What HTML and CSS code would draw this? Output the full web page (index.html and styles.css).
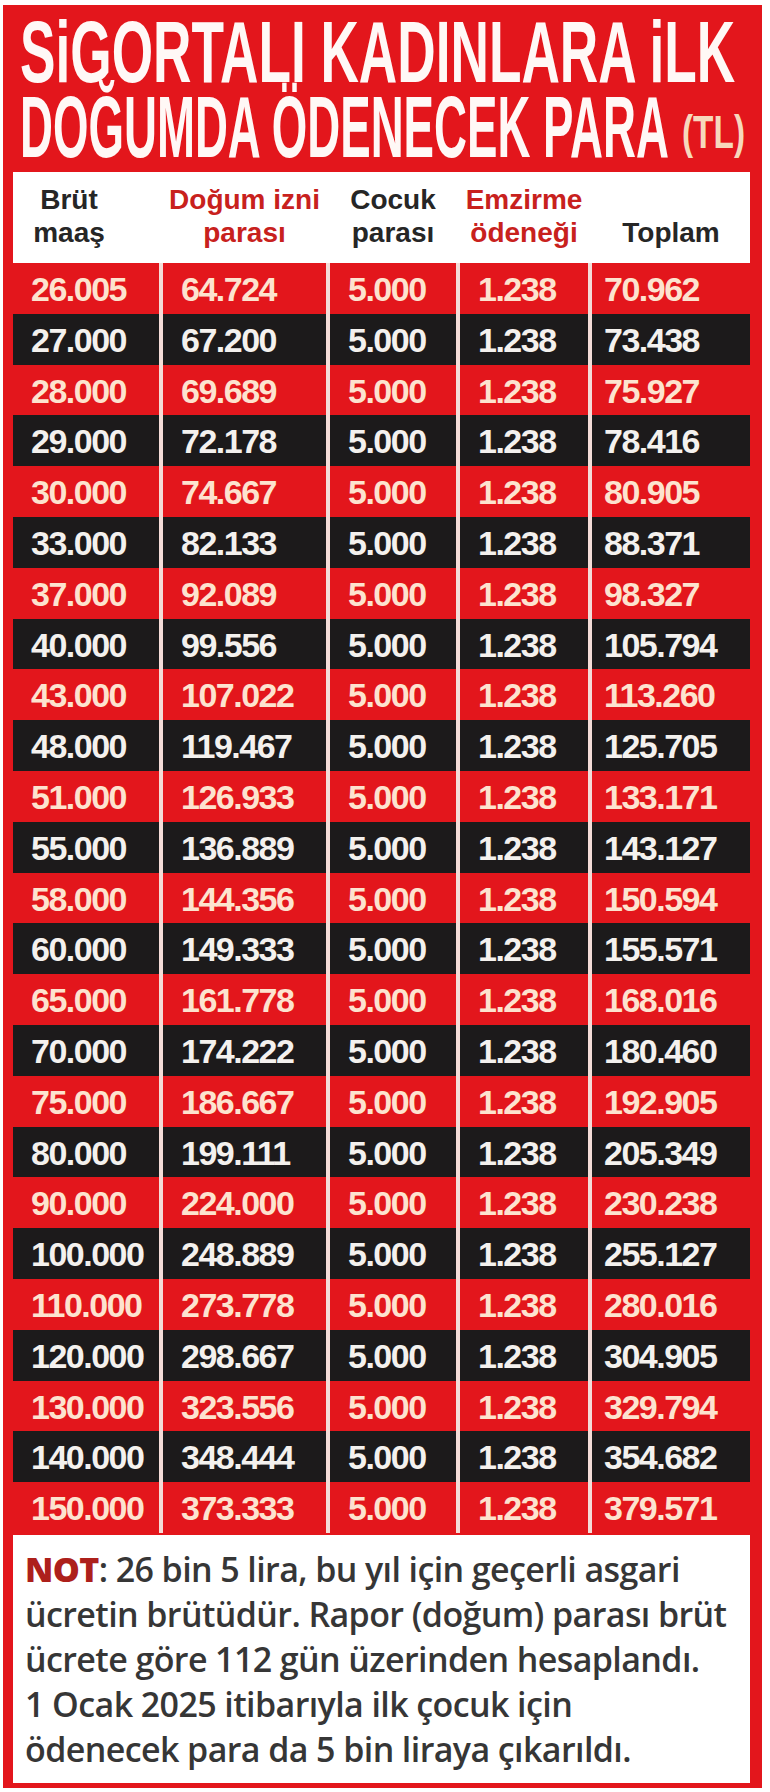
FILE: index.html
```html
<!DOCTYPE html>
<html lang="tr">
<head>
<meta charset="utf-8">
<title>Sigortalı kadınlara ilk doğumda ödenecek para</title>
<link rel="stylesheet" href="styles.css">
</head>
<body>
<div class="panel">
  <h1 class="title">
    <span class="t1">SiGORTALI KADINLARA iLK</span>
    <span class="t2"><span class="t2-main">DOĞUMDA ÖDENECEK PARA</span><span class="tl">(TL)</span></span>
  </h1>
  <div class="thead">
    <div class="th th-first">Brüt<br>maaş</div>
    <div class="th red-text">Doğum izni<br>parası</div>
    <div class="th">Cocuk<br>parası</div>
    <div class="th red-text">Emzirme<br>ödeneği</div>
    <div class="th">Toplam</div>
  </div>
  <div class="rows">
    <div class="row"><div>26.005</div><div>64.724</div><div>5.000</div><div>1.238</div><div>70.962</div></div>
    <div class="row"><div>27.000</div><div>67.200</div><div>5.000</div><div>1.238</div><div>73.438</div></div>
    <div class="row"><div>28.000</div><div>69.689</div><div>5.000</div><div>1.238</div><div>75.927</div></div>
    <div class="row"><div>29.000</div><div>72.178</div><div>5.000</div><div>1.238</div><div>78.416</div></div>
    <div class="row"><div>30.000</div><div>74.667</div><div>5.000</div><div>1.238</div><div>80.905</div></div>
    <div class="row"><div>33.000</div><div>82.133</div><div>5.000</div><div>1.238</div><div>88.371</div></div>
    <div class="row"><div>37.000</div><div>92.089</div><div>5.000</div><div>1.238</div><div>98.327</div></div>
    <div class="row"><div>40.000</div><div>99.556</div><div>5.000</div><div>1.238</div><div>105.794</div></div>
    <div class="row"><div>43.000</div><div>107.022</div><div>5.000</div><div>1.238</div><div>113.260</div></div>
    <div class="row"><div>48.000</div><div>119.467</div><div>5.000</div><div>1.238</div><div>125.705</div></div>
    <div class="row"><div>51.000</div><div>126.933</div><div>5.000</div><div>1.238</div><div>133.171</div></div>
    <div class="row"><div>55.000</div><div>136.889</div><div>5.000</div><div>1.238</div><div>143.127</div></div>
    <div class="row"><div>58.000</div><div>144.356</div><div>5.000</div><div>1.238</div><div>150.594</div></div>
    <div class="row"><div>60.000</div><div>149.333</div><div>5.000</div><div>1.238</div><div>155.571</div></div>
    <div class="row"><div>65.000</div><div>161.778</div><div>5.000</div><div>1.238</div><div>168.016</div></div>
    <div class="row"><div>70.000</div><div>174.222</div><div>5.000</div><div>1.238</div><div>180.460</div></div>
    <div class="row"><div>75.000</div><div>186.667</div><div>5.000</div><div>1.238</div><div>192.905</div></div>
    <div class="row"><div>80.000</div><div>199.111</div><div>5.000</div><div>1.238</div><div>205.349</div></div>
    <div class="row"><div>90.000</div><div>224.000</div><div>5.000</div><div>1.238</div><div>230.238</div></div>
    <div class="row"><div>100.000</div><div>248.889</div><div>5.000</div><div>1.238</div><div>255.127</div></div>
    <div class="row"><div>110.000</div><div>273.778</div><div>5.000</div><div>1.238</div><div>280.016</div></div>
    <div class="row"><div>120.000</div><div>298.667</div><div>5.000</div><div>1.238</div><div>304.905</div></div>
    <div class="row"><div>130.000</div><div>323.556</div><div>5.000</div><div>1.238</div><div>329.794</div></div>
    <div class="row"><div>140.000</div><div>348.444</div><div>5.000</div><div>1.238</div><div>354.682</div></div>
    <div class="row"><div>150.000</div><div>373.333</div><div>5.000</div><div>1.238</div><div>379.571</div></div>
  </div>
  <p class="note"><b>NOT</b>: 26 bin 5 lira, bu yıl için geçerli asgari<br>ücretin brütüdür. Rapor (doğum) parası brüt<br>ücrete göre 112 gün üzerinden hesaplandı.<br>1 Ocak 2025 itibarıyla ilk çocuk için<br>ödenecek para da 5 bin liraya çıkarıldı.</p>
</div>
</body>
</html>
```

FILE: styles.css
```css
html, body {
  margin: 0;
  padding: 0;
  background: #ffffff;
}

.panel {
  margin: 5px 8px 4px 3px;
  padding: 0 12px 5px 10px;
  background: #e3161c;
  overflow: hidden;
}

.title {
  margin: 0;
  padding: 9px 0 0 7px;
  height: 167px;
  box-sizing: border-box;
  color: #fff8f6;
  font-family: "Liberation Sans", Arial, sans-serif;
  font-weight: 700;
  font-size: 88px;
  line-height: 75px;
}

.t1 {
  display: block;
  white-space: nowrap;
  transform: scaleX(0.6045);
  transform-origin: 0 0;
}

.t2 {
  display: flex;
  align-items: flex-start;
  white-space: nowrap;
}

.t2-main {
  flex: 0 0 645px;
  width: 645px;
  min-width: 0;
  transform: scaleX(0.5185);
  transform-origin: 0 0;
}

.tl {
  flex: 0 0 auto;
  margin: 20px 0 0 17px;
  font-size: 47px;
  line-height: 45px;
  color: #f7d8bc;
  transform: scaleX(0.71);
  transform-origin: 0 0;
}

.thead {
  display: grid;
  grid-template-columns: 146px 163px 126px 128px 1fr;
  column-gap: 4px;
  align-items: end;
  height: 91px;
  box-sizing: border-box;
  padding-bottom: 14px;
  background: #ffffff;
  font-family: "Liberation Sans", Arial, sans-serif;
  font-weight: 700;
  font-size: 28px;
  line-height: 33px;
  color: #262626;
}

.th {
  text-align: center;
  white-space: nowrap;
}

.th-first {
  padding-right: 34px;
}

.red-text {
  color: #c8211d;
}

.rows {
  display: flex;
  flex-direction: column;
}

.row {
  display: grid;
  grid-template-columns: 146px 163px 126px 128px 1fr;
  column-gap: 4px;
  height: 50.8px;
  background: #f4dcd8;
  font-family: "Liberation Sans", Arial, sans-serif;
  font-weight: 700;
  font-size: 34px;
  line-height: 47.8px;
  letter-spacing: -1.5px;
}

.row > div {
  padding: 3px 0 0 18px;
  background: #e3161c;
  color: #fde3cf;
  white-space: nowrap;
}

.row > div:last-child {
  padding-left: 12px;
}

.row:nth-child(even) > div {
  background: #1c1a1b;
  color: #f4f1ee;
}

.note {
  margin: 2px 0 0 0;
  height: 248px;
  box-sizing: border-box;
  padding: 12px 0 0 12px;
  background: #ffffff;
  font-family: "Open Sans", "Noto Sans", sans-serif;
  font-weight: 600;
  font-size: 34px;
  line-height: 45px;
  letter-spacing: -0.6px;
  color: #363636;
  white-space: nowrap;
}

.note b {
  color: #ad201b;
  font-weight: 800;
}
```
